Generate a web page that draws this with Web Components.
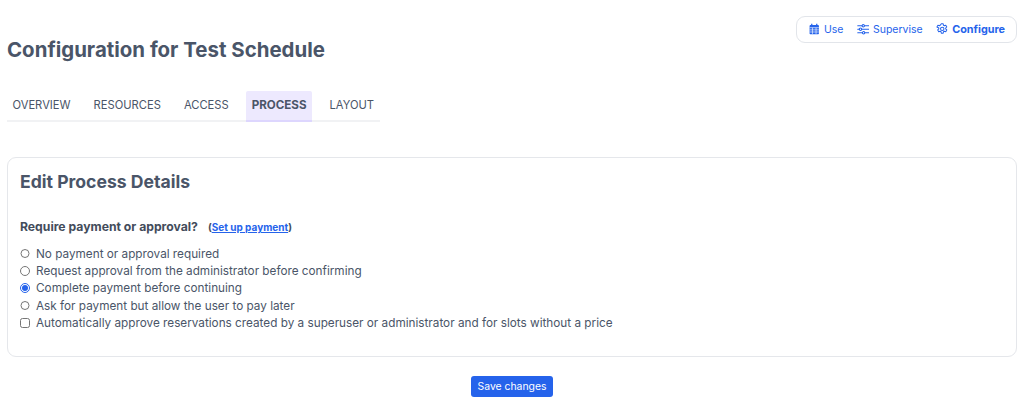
<!DOCTYPE html>
<html lang="en"><head><meta charset="utf-8"><title>Configuration</title>
<style>
html,body{margin:0;padding:0;background:#fff;height:415px;overflow:hidden}
body{font-family:Inter,"Liberation Sans",sans-serif;color:#4a5568}
</style></head><body>
<config-page></config-page>
<script>
const ICONS={
cal:'<path fill="currentColor" stroke="none" d="M4 1h1.600v1.600h4.800V1H12v1.600h.6c.8 0 1.400.6 1.400 1.400v9c0 .8-.6 1.400-1.400 1.400H3.400C2.600 14.400 2 13.800 2 13V4c0-.8.6-1.400 1.400-1.400H4z"/><path stroke="#fff" stroke-width=".8" d="M2 6h12M2 8.800h12M2 11.500h12M5.700 6v8M10.300 6v8"/>',
sliders:'<path stroke-width="1.500" stroke-linecap="round" d="M1 3.500h5.500M9.500 3.500h5.500M1 8h2M6 8h9M1 12.500h6M10 12.500h5"/><circle cx="8" cy="3.500" r="1.500" stroke-width="1.300"/><circle cx="4.500" cy="8" r="1.500" stroke-width="1.300"/><circle cx="8.500" cy="12.500" r="1.500" stroke-width="1.300"/>',
gear:'<path stroke-width="1.300" stroke-linejoin="round" d="M6.800 1h2.400l.4 1.900 1.100.6 1.800-.6 1.300 2.200-1.400 1.300v1.200l1.400 1.300-1.300 2.200-1.800-.6-1.100.6-.4 1.900H6.800l-.4-1.900-1.100-.6-1.800.6-1.300-2.200 1.400-1.300V6.400L1.200 5.100l1.300-2.200 1.800.6 1.100-.6z"/><circle cx="8" cy="7.500" r="2.200" stroke-width="1.300"/>'};
function def(name,html,init){customElements.define(name,class extends HTMLElement{constructor(){super();this.attachShadow({mode:'open'}).innerHTML=html;}connectedCallback(){init&&init.call(this)}})}

def('mode-link',`<style>
:host{display:inline-flex;align-items:center;gap:4px;color:#2563eb;font-size:10.500px;line-height:14px}
:host([active]){font-weight:700;font-size:10.800px}
svg{width:12.500px;height:12.500px;fill:none;stroke:currentColor;flex:none}
</style><svg viewBox="0 0 16 16"></svg><slot></slot>`,function(){this.shadowRoot.querySelector('svg').innerHTML=ICONS[this.getAttribute('icon')]});

def('mode-switch',`<style>
:host{display:flex;align-items:center;gap:13px;height:25px;padding:0 11px;border:1px solid #e2e5ea;border-radius:9px}
</style><slot></slot>`);

def('tab-item',`<style>
:host{display:flex;align-items:center;height:29px;padding:0 5.500px;margin-right:12px;font-size:11.200px;color:#4a5568;border-bottom:2px solid transparent;margin-bottom:-2px;border-radius:2px 2px 0 0}
span{position:relative;top:-1px}
:host([active]){background:#ede9fe;border-bottom-color:#ddd6fe;font-weight:700;font-size:11.600px}
</style><span><slot></slot></span>`);

def('tab-bar',`<style>
:host{display:flex;align-self:flex-start;width:373px;border-bottom:2px solid #f1f2f4;box-sizing:border-box}
</style><slot></slot>`);

def('choice-row',`<style>
:host{display:flex;align-items:center;gap:6.500px;height:17.300px;font-size:11.750px;color:#4a5568}
input{margin:0;width:9.500px;height:9.500px;flex:none;accent-color:#2563eb}
</style><input><slot></slot>`,function(){const i=this.shadowRoot.querySelector('input');i.type=this.getAttribute('type')||'radio';i.checked=this.hasAttribute('checked')});

def('panel-card',`<style>
:host{display:block;height:200px;box-sizing:border-box;border:1px solid #e5e7eb;border-radius:9px;padding:14px 12px 0}
h2{margin:0;font-size:17.600px;line-height:20px;font-weight:700;color:#4a5568}
.q{margin-top:27px;display:flex;align-items:baseline;height:18px;font-size:12.200px;font-weight:700;color:#434c5b;gap:10px}
.q span{font-size:10px}
a{color:#2563eb;text-decoration:underline}
.list{margin-top:8px;display:block}
</style><h2><slot name="title"></slot></h2>
<div class="q"><slot name="question"></slot><span>(<a href="#">Set up payment</a>)</span></div>
<div class="list"><slot></slot></div>`);

def('save-button',`<style>
:host{display:block;margin:19px auto 0;width:82px;height:21px;line-height:21px;text-align:center;background:#2563eb;color:#fff;border-radius:3px;font-size:10.400px}
</style><slot></slot>`);

def('config-page',`<style>
:host{display:flex;flex-direction:column;padding:16px 7px 0;box-sizing:border-box;width:1024px;height:415px}
.top{display:flex;justify-content:space-between;align-items:flex-start;height:59px}
h1{margin:21px 0 0;font-size:20.450px;line-height:26px;font-weight:700;color:#4a5568;white-space:nowrap}
.gap{height:35px}
</style>
<div class="top"><h1>Configuration for Test Schedule</h1>
<mode-switch>
<mode-link icon="cal">Use</mode-link><mode-link icon="sliders">Supervise</mode-link><mode-link icon="gear" active>Configure</mode-link>
</mode-switch></div>
<div style="height:16px"></div>
<tab-bar><tab-item>OVERVIEW</tab-item><tab-item>RESOURCES</tab-item><tab-item>ACCESS</tab-item><tab-item active>PROCESS</tab-item><tab-item>LAYOUT</tab-item></tab-bar>
<div class="gap"></div>
<panel-card>
<span slot="title">Edit Process Details</span>
<span slot="question">Require payment or approval?</span>
<choice-row>No payment or approval required</choice-row>
<choice-row>Request approval from the administrator before confirming</choice-row>
<choice-row checked>Complete payment before continuing</choice-row>
<choice-row>Ask for payment but allow the user to pay later</choice-row>
<choice-row type="checkbox">Automatically approve reservations created by a superuser or administrator and for slots without a price</choice-row>
</panel-card>
<save-button>Save changes</save-button>`);
</script></body></html>
